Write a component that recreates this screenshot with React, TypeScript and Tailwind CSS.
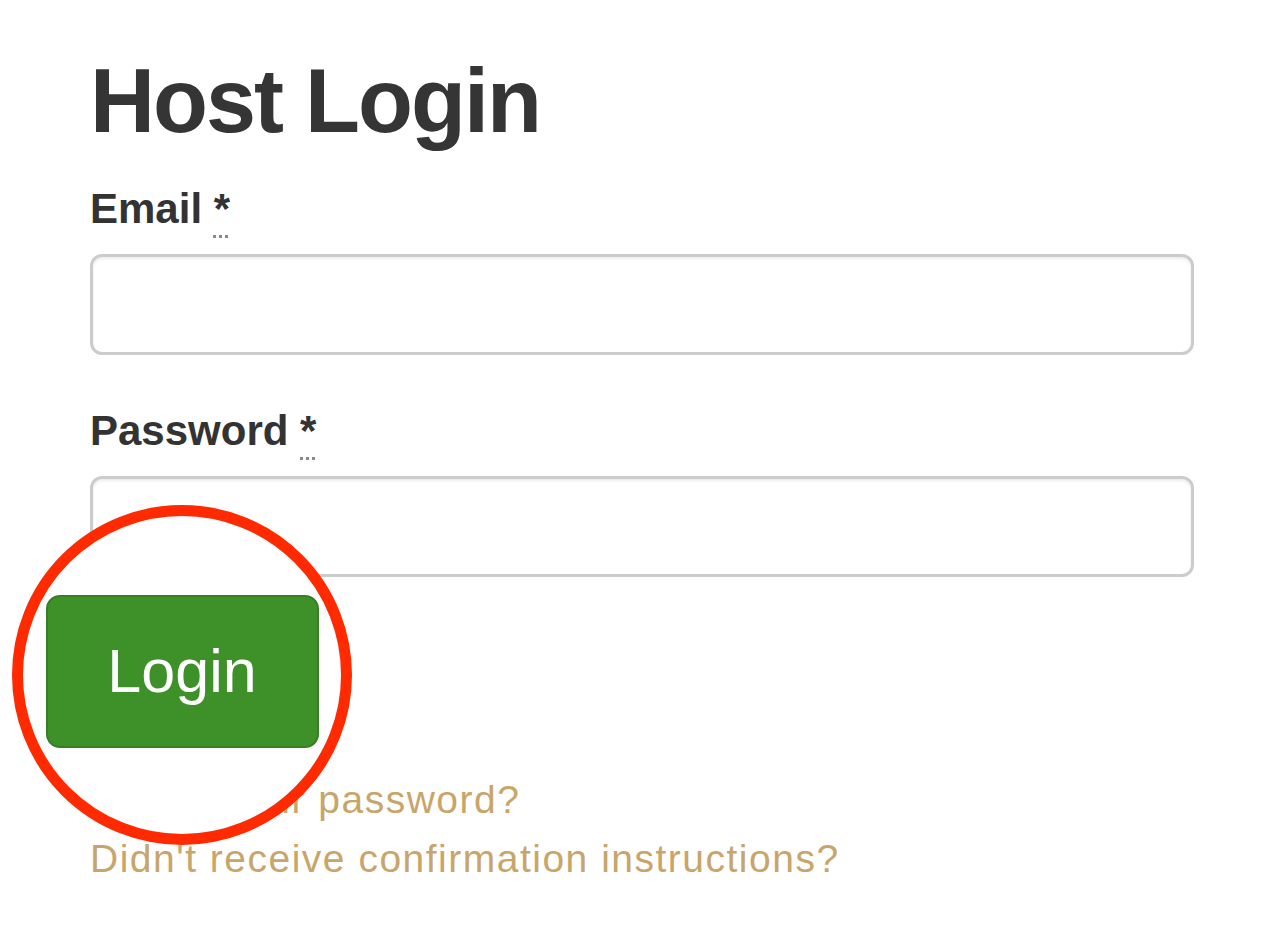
import React from 'react';

const Field: React.FC<{ label: string; type: string; id: string }> = ({ label, type, id }) => (
    <div className="flex flex-col">
        <label htmlFor={id} className="text-[42px] leading-[48px] font-bold text-[#333] mb-[21px]">
            {label}{' '}
            <abbr
                title="required"
                className="underline decoration-dotted decoration-[3px] underline-offset-[12px] decoration-[#888]"
            >
                *
            </abbr>
        </label>
        <input
            id={id}
            type={type}
            className="h-[101px] w-full rounded-[12px] border-[3px] border-[#cccccc] bg-white shadow-[inset_0_2px_3px_rgba(0,0,0,0.08)] outline-none"
        />
    </div>
);

const App: React.FC = () => {
    return (
        <div className="relative min-h-[935px] bg-white font-['Liberation_Sans',Arial,sans-serif]">
            <div className="w-[1194px] pl-[90px] pt-[52px]">
                <h1 className="text-[90px] leading-[99px] font-bold tracking-[-2px] text-[#353535] mb-[34px]">
                    Host Login
                </h1>

                <form className="flex flex-col gap-[52px]">
                    <Field label="Email" type="email" id="email" />
                    <Field label="Password" type="password" id="password" />
                </form>

                {/* room for the real-size button, covered by the callout */}
                <div className="h-[193px]" />

                <div className="flex flex-col text-[39px] leading-[59px] tracking-[1.5px] text-[#c8a56a]">
                    <a href="#" className="w-fit">Forgot your password?</a>
                    <a href="#" className="w-fit">Didn't receive confirmation instructions?</a>
                </div>
            </div>

            {/* magnified callout over the login button */}
            <div className="absolute left-[12px] top-[505px] w-[340px] h-[340px] rounded-full border-[11px] border-[#ff2a00] bg-white flex items-center justify-center">
                <button
                    type="button"
                    className="mb-[8px] w-[273px] h-[153px] rounded-[14px] border-[2px] border-[#367f22] bg-[#3e9029] text-white text-[61px] leading-none"
                >
                    Login
                </button>
            </div>
        </div>
    );
};

export default App;
